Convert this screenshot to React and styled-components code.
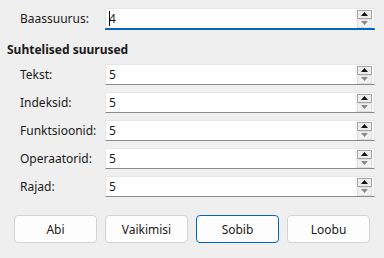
import styled, { createGlobalStyle } from 'styled-components'

const Global = createGlobalStyle`
    body {
        margin: 0;
        background: #efefef;
        font-family: "Noto Sans", "Open Sans", sans-serif;
        font-size: 12px;
        color: #1a1a1a;
    }
`

const rows = [
    { label: 'Tekst:', value: '5' },
    { label: 'Indeksid:', value: '5' },
    { label: 'Funktsioonid:', value: '5' },
    { label: 'Operaatorid:', value: '5' },
    { label: 'Rajad:', value: '5' },
]

function Spin({ value, focused }) {
    return (
        <Field focused={focused}>
            <Value>
                {focused && <Caret />}
                {value}
            </Value>
            <SpinBox>
                <SpinButton up>
                    <svg width="7" height="4" viewBox="0 0 7 4"><path d="M0 4 L3.5 0 L7 4 Z" fill="#111" /></svg>
                </SpinButton>
                <SpinButton>
                    <svg width="7" height="4" viewBox="0 0 7 4"><path d="M0 0 L3.5 4 L7 0 Z" fill="#8a8a8a" /></svg>
                </SpinButton>
            </SpinBox>
        </Field>
    )
}

export default function App() {
    return (
        <>
            <Global />
            <Page>
                <Row>
                    <Label>Baassuurus:</Label>
                    <Spin value="4" focused />
                </Row>
                <Heading>Suhtelised suurused</Heading>
                <List>
                    {rows.map((r) => (
                        <Row key={r.label}>
                            <Label>{r.label}</Label>
                            <Spin value={r.value} />
                        </Row>
                    ))}
                </List>
                <Buttons>
                    <Button>Abi</Button>
                    <Button>Vaikimisi</Button>
                    <Button primary>Sobib</Button>
                    <Button>Loobu</Button>
                </Buttons>
            </Page>
        </>
    )
}

//styles
const Page = styled.div`
    width: 384px;
    height: 258px;
    box-sizing: border-box;
    padding: 8px 9px 0 7px;
    display: flex;
    flex-direction: column;
`

const Row = styled.div`
    display: flex;
    align-items: center;
    height: 21px;
`

const Label = styled.div`
    width: 98px;
    padding-left: 13px;
    box-sizing: border-box;
    flex-shrink: 0;
    padding-bottom: 1px;
    white-space: nowrap;
`

const Heading = styled.div`
    font-weight: 700;
    margin-top: 12px;
    margin-bottom: 6px;
    height: 17px;
    line-height: 17px;
`

const List = styled.div`
    display: flex;
    flex-direction: column;
    gap: 7px;
`

const Field = styled.div`
    flex: 1;
    height: 21px;
    box-sizing: border-box;
    display: flex;
    align-items: stretch;
    background: #fff;
    border: 1px solid #e6e6e6;
    border-bottom: 1px solid ${(p) => (p.focused ? '#0067c0' : '#8a8a8a')};
    box-shadow: ${(p) => (p.focused ? '0 1px 0 #0067c0' : 'none')};
`

const Value = styled.div`
    flex: 1;
    display: flex;
    align-items: center;
    padding-left: 3px;
    position: relative;
`

const Caret = styled.span`
    position: absolute;
    left: 3px;
    top: 2px;
    width: 1px;
    height: 15px;
    background: #000;
`

const SpinBox = styled.div`
    width: 18px;
    background: #f7f7f7;
    display: flex;
    flex-direction: column;
    justify-content: center;
    align-items: center;
    padding-right: 1px;
`

const SpinButton = styled.div`
    width: 15px;
    height: 9px;
    box-sizing: border-box;
    display: flex;
    align-items: center;
    justify-content: center;
    background: ${(p) => (p.up ? '#ececec' : '#f1f1f1')};
    border: 1px solid ${(p) => (p.up ? '#a8a8a8' : '#dedede')};
`

const Buttons = styled.div`
    margin-top: 18px;
    display: flex;
    gap: 8px;
    padding-left: 7px;
`

const Button = styled.button`
    width: 83px;
    height: 28px;
    box-sizing: border-box;
    font-family: inherit;
    font-size: 12px;
    color: #1a1a1a;
    background: #fdfdfd;
    border: 1px solid ${(p) => (p.primary ? '#0067c0' : '#d3d3d3')};
    box-shadow: ${(p) => (p.primary ? 'inset 0 0 0 1px #ffffff' : 'none')};
    border-radius: 4px;
    padding: 0;
`
